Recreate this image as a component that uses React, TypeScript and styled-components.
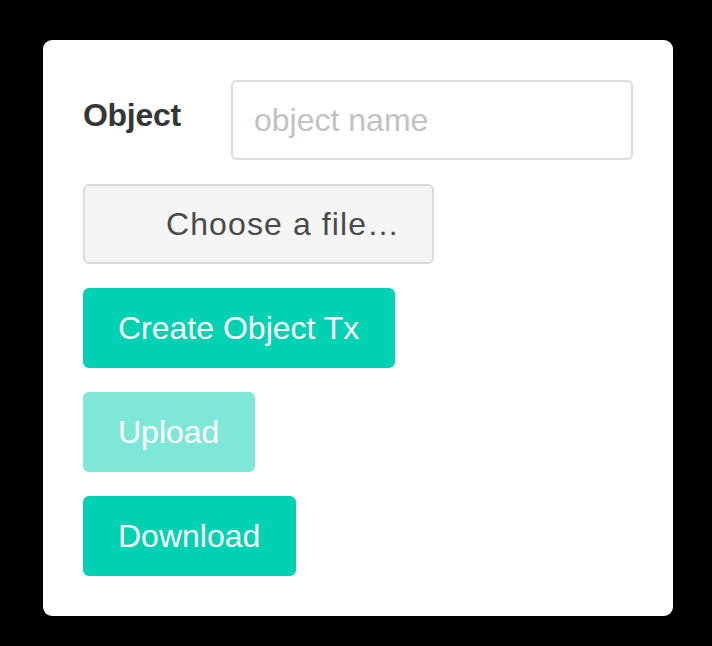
import { createGlobalStyle, styled } from 'styled-components'

const GlobalStyle = createGlobalStyle`
  html, body {
    margin: 0;
    background: #000;
  }
  body {
    font-family: "Liberation Sans", Arial, sans-serif;
  }
`;

const Page = styled.div`
  padding: 40px 0 30px 43px;
`;

const Card = styled.div`
  box-sizing: border-box;
  width: 630px;
  padding: 40px;
  background: #fff;
  border-radius: 9px;
  display: flex;
  flex-direction: column;
  align-items: flex-start;
  gap: 24px;
`;

const Field = styled.div`
  display: flex;
  align-items: flex-start;
  width: 100%;
`;

const Label = styled.label`
  width: 148px;
  flex: none;
  padding-top: 11px;
  font-size: 32px;
  line-height: 48px;
  font-weight: 700;
  color: #363636;
  letter-spacing: -0.3px;
`;

const Input = styled.input`
  flex: 1;
  min-width: 0;
  box-sizing: border-box;
  height: 80px;
  padding: 0 21px;
  border: 2px solid #dbdbdb;
  border-radius: 6px;
  font-family: inherit;
  font-size: 32px;
  color: #363636;
  outline: none;

  &::placeholder {
    color: #c2c2c2;
  }
`;

const FileLabel = styled.label`
  box-sizing: border-box;
  display: inline-flex;
  align-items: center;
  width: 351px;
  height: 80px;
  padding-left: 81px;
  background: #f5f5f5;
  border: 2px solid #dbdbdb;
  border-radius: 6px;
  font-size: 32px;
  color: #4a4a4a;
  letter-spacing: 1.1px;
  cursor: pointer;

  input {
    display: none;
  }
`;

const Button = styled.button<{ $faded?: boolean }>`
  box-sizing: border-box;
  height: 80px;
  padding: 0 36px 0 35px;
  border: none;
  border-radius: 6px;
  background: #00d1b2;
  color: #fff;
  font-family: inherit;
  font-size: 32px;
  line-height: 1;
  opacity: ${p => (p.$faded ? 0.5 : 1)};
  cursor: ${p => (p.$faded ? 'not-allowed' : 'pointer')};
`;

export default function App() {
  return (
    <Page>
      <GlobalStyle />
      <Card>
        <Field>
          <Label htmlFor="object-name">Object</Label>
          <Input id="object-name" type="text" placeholder="object name" />
        </Field>
        <FileLabel>
          <input type="file" />
          Choose a file…
        </FileLabel>
        <Button>Create Object Tx</Button>
        <Button $faded disabled>Upload</Button>
        <Button>Download</Button>
      </Card>
    </Page>
  );
}
